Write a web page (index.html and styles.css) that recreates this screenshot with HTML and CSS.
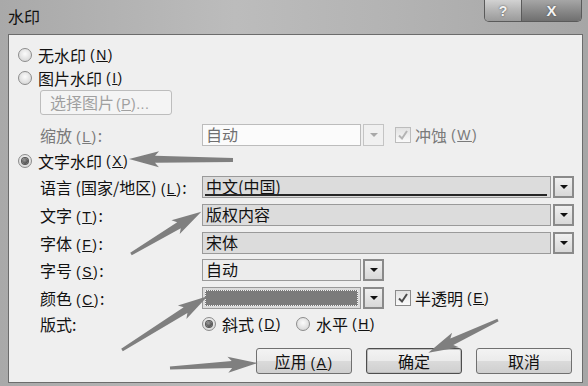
FILE: index.html
```html
<!DOCTYPE html>
<html lang="zh-CN">
<head>
  <meta charset="UTF-8" />
  <title>水印</title>
  <link rel="stylesheet" href="styles.css">
</head>
<body>
  <div class="dialog">
    <div class="titlebar">
      <span class="title">水印</span>
      <div class="caption">
        <span class="cap-btn help">?</span>
        <span class="cap-btn close">X</span>
      </div>
    </div>

    <div class="panel">
      <div class="form">
        <label class="opt full"><span class="radio"></span>无水印<span class="key">(<u>N</u>)</span></label>
        <label class="opt full"><span class="radio"></span>图片水印<span class="key">(<u>I</u>)</span></label>
        <div class="span-right">
          <span class="pick-btn">选择图片<span class="key">(<u>P</u>)...</span></span>
        </div>

        <span class="lbl disabled">缩放<span class="key">(<u>L</u>)</span>:</span>
        <div class="inline">
          <div class="combo short off">
            <span class="field">自动</span>
            <span class="drop"><i class="tri"></i></span>
          </div>
          <label class="check-opt disabled">
            <span class="check off"><svg viewBox="0 0 14 14"><path d="M3 7.5 L6 10.5 L11 3"/></svg></span>冲蚀<span class="key">(<u>W</u>)</span>
          </label>
        </div>

        <label class="opt full"><span class="radio on"></span>文字水印<span class="key">(<u>X</u>)</span></label>

        <span class="lbl">语言 (国家/地区)<span class="key">(<u>L</u>)</span>:</span>
        <div class="combo wide">
          <span class="field lang"><span class="sel">中文(中国)</span></span>
          <span class="drop"><i class="tri"></i></span>
        </div>

        <span class="lbl">文字<span class="key">(<u>T</u>)</span>:</span>
        <div class="combo wide">
          <span class="field">版权内容</span>
          <span class="drop"><i class="tri"></i></span>
        </div>

        <span class="lbl">字体<span class="key">(<u>F</u>)</span>:</span>
        <div class="combo wide">
          <span class="field">宋体</span>
          <span class="drop"><i class="tri"></i></span>
        </div>

        <span class="lbl">字号<span class="key">(<u>S</u>)</span>:</span>
        <div class="combo short">
          <span class="field light">自动</span>
          <span class="drop"><i class="tri"></i></span>
        </div>

        <span class="lbl">颜色<span class="key">(<u>C</u>)</span>:</span>
        <div class="inline">
          <div class="combo short">
            <span class="field swatch"><span class="swatch-fill"></span></span>
            <span class="drop"><i class="tri"></i></span>
          </div>
          <label class="check-opt">
            <span class="check"><svg viewBox="0 0 14 14"><path d="M3 7.5 L6 10.5 L11 3"/></svg></span>半透明<span class="key">(<u>E</u>)</span>
          </label>
        </div>

        <span class="lbl">版式:</span>
        <div class="inline layout">
          <label class="opt"><span class="radio on"></span>斜式<span class="key">(<u>D</u>)</span></label>
          <label class="opt"><span class="radio"></span>水平<span class="key">(<u>H</u>)</span></label>
        </div>
      </div>

      <div class="actions">
        <button class="btn">应用<span class="key">(<u>A</u>)</span></button>
        <button class="btn default">确定</button>
        <button class="btn">取消</button>
      </div>
    </div>

    <svg class="arrows" width="588" height="386" viewBox="0 0 588 386">
      <g fill="#7f7f7f">
        <path transform="translate(233 160) rotate(180.5)" d="M0,-2 L78,-3.5 L74,-8 L104,0 L74,8 L78,3.5 L0,2 Z"/>
        <path transform="translate(131 254) rotate(-31)" d="M0,-1.5 L56,-3.5 L52,-8 L82,0 L52,8 L56,3.5 L0,1.5 Z"/>
        <path transform="translate(122 350) rotate(-32.1)" d="M0,-1.5 L75,-3.5 L71,-8 L101,0 L71,8 L75,3.5 L0,1.5 Z"/>
        <path transform="translate(170 368) rotate(-3.25)" d="M0,-1.5 L62,-3.5 L58,-8 L88,0 L58,8 L62,3.5 L0,1.5 Z"/>
        <path transform="translate(498 320) rotate(154.8)" d="M0,-1.5 L51,-3.5 L47,-8 L77,0 L47,8 L51,3.5 L0,1.5 Z"/>
      </g>
    </svg>
  </div>
</body>
</html>
```

FILE: styles.css
```css
body {
  margin: 0;
  font-family: "Noto Sans CJK SC", "Liberation Sans", sans-serif;
  color: #111;
}
.dialog {
  position: relative;
  width: 588px;
  height: 386px;
  overflow: hidden;
  background: linear-gradient(90deg, #a9a9a9, #bcbcbc 40%, #b2b2b2 70%, #a6a6a6);
}
.titlebar {
  height: 34px;
  display: flex;
  justify-content: space-between;
  align-items: flex-start;
}
.title {
  margin: 5px 0 0 8px;
  font-size: 16px;
  line-height: 22px;
}
.caption {
  display: flex;
  margin-right: 6px;
  border: 1px solid #5a5a5a;
  border-top: 0;
  border-radius: 0 0 5px 5px;
  overflow: hidden;
}
.cap-btn {
  height: 21px;
  display: flex;
  align-items: center;
  justify-content: center;
  font-family: "Liberation Sans", sans-serif;
  font-weight: bold;
  color: #f4f4f4;
  text-shadow: 0 0 2px #444;
}
.help {
  width: 36px;
  font-size: 14px;
  background: linear-gradient(#d2d2d2, #b4b4b4 50%, #9a9a9a);
  border-right: 1px solid #5a5a5a;
}
.close {
  width: 59px;
  font-size: 15px;
  background: linear-gradient(#a6a6a6, #8a8a8a 50%, #6f6f6f);
}

.panel {
  box-sizing: border-box;
  height: 349px;
  margin: 0 5px 0 8px;
  border: 1px solid #6c6c6c;
  background: #efefef;
  font-size: 16px;
}
.form {
  display: grid;
  grid-template-columns: 22px 162px 1fr;
  grid-template-rows: 23px 23px 32px 27px 25px 27px 29px 28px 25px 32px 19px;
  align-items: center;
  padding: 8px 8px 0 9px;
}
.full {
  grid-column: 1 / -1;
}
.span-right {
  grid-column: 2 / -1;
}
.lbl {
  grid-column: 2;
  white-space: nowrap;
}
.disabled {
  color: #7a7a7a;
}
.key {
  font-family: "Liberation Sans", sans-serif;
  font-size: 14px;
  letter-spacing: 1.5px;
  margin-left: 4px;
}
.opt {
  display: flex;
  align-items: center;
  line-height: 20px;
}
.radio {
  position: relative;
  box-sizing: border-box;
  width: 14px;
  height: 14px;
  margin-right: 6px;
  border-radius: 50%;
  border: 1px solid #8c8c8c;
  background: radial-gradient(circle at 50% 40%, #fbfbfb, #cfcfcf);
}
.radio.on::after {
  content: "";
  position: absolute;
  left: 3px;
  top: 3px;
  width: 6px;
  height: 6px;
  border-radius: 50%;
  background: radial-gradient(circle at 40% 35%, #9a9a9a, #2d2d2d);
  box-shadow: 0 0 0 1px #555;
}
.pick-btn {
  display: inline-block;
  box-sizing: border-box;
  width: 132px;
  height: 25px;
  line-height: 23px;
  padding-left: 9px;
  border: 1px solid #bdbdbd;
  border-radius: 3px;
  background: #f4f4f4;
  color: #a0a0a0;
  white-space: nowrap;
  overflow: hidden;
}
.pick-btn .key {
  letter-spacing: 0.5px;
  margin-left: 2px;
}

.inline {
  display: flex;
  align-items: center;
}
.combo {
  display: flex;
  height: 22px;
  gap: 2px;
  font-size: 16px;
}
.combo.wide {
  width: 372px;
}
.combo.short {
  width: 182px;
}
.field {
  flex: 1;
  box-sizing: border-box;
  border: 1px solid #9a9a9a;
  background: #dcdcdc;
  padding: 0 3px;
  line-height: 19px;
  white-space: nowrap;
}
.field.light {
  background: #ececec;
}
.lang {
  position: relative;
}
.lang::after {
  content: "";
  position: absolute;
  left: 2px;
  right: 3px;
  bottom: 1px;
  border-bottom: 2px solid #262626;
}
.sel {
  text-decoration: underline;
  text-underline-offset: 1px;
}
.drop {
  box-sizing: border-box;
  width: 21px;
  border: 2px solid #8a8a8a;
  background: linear-gradient(#f0f0f0, #d8d8d8);
  display: flex;
  align-items: center;
  justify-content: center;
}
.tri {
  width: 0;
  height: 0;
  border-left: 4px solid transparent;
  border-right: 4px solid transparent;
  border-top: 4px solid #111;
}
.off .field {
  background: #fbfbfb;
  border-color: #bcbcbc;
  color: #707070;
}
.off .drop {
  border: 1px solid #c4c4c4;
  background: #f0f0f0;
}
.off .tri {
  border-top-color: #a8a8a8;
}
.swatch {
  padding: 2px;
  background: #dcdcdc;
}
.swatch-fill {
  display: block;
  height: 100%;
  box-sizing: border-box;
  border: 1px dotted #f2f2f2;
  background: #7b7b7b;
}

.check-opt {
  display: flex;
  align-items: center;
  margin-left: 11px;
}
.check {
  box-sizing: border-box;
  width: 16px;
  height: 16px;
  margin-right: 4px;
  border: 1px solid #8a8a8a;
  background: linear-gradient(#e2e2e2, #fafafa);
}
.check svg {
  display: block;
  width: 14px;
  height: 14px;
  fill: none;
  stroke: #4a4a4a;
  stroke-width: 2;
}
.check.off {
  border-color: #bcbcbc;
}
.check.off svg {
  stroke: #b4b4b4;
}
.layout {
  gap: 14px;
}

.actions {
  display: flex;
  justify-content: flex-end;
  gap: 14px;
  margin-top: 15px;
  padding-right: 10px;
}
.btn {
  box-sizing: border-box;
  width: 96px;
  height: 26px;
  padding: 0;
  border: 1px solid #707070;
  border-radius: 3px;
  background: linear-gradient(#f3f3f3, #ebebeb 48%, #dadada 52%, #cfcfcf);
  font-family: inherit;
  font-size: 16px;
  color: #111;
}
.btn.default {
  border-color: #4e4e4e;
  box-shadow: inset 0 0 0 1px #bdbdbd;
}

.arrows {
  position: absolute;
  left: 0;
  top: 0;
  pointer-events: none;
}
```
